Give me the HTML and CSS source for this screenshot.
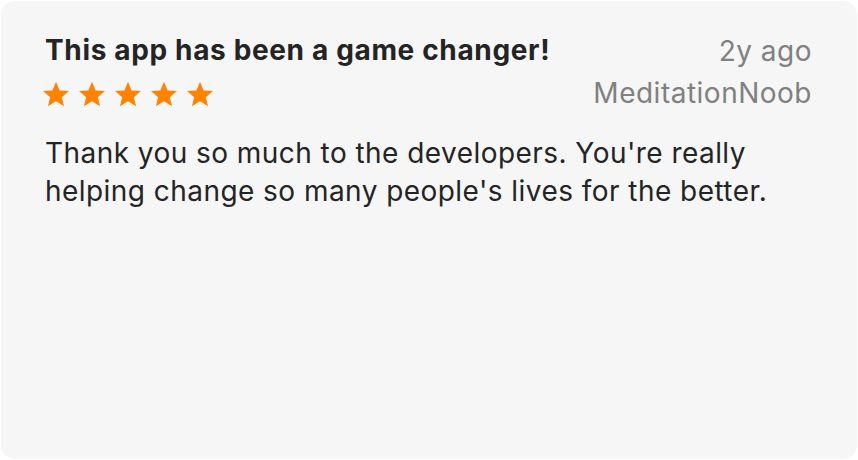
FILE: index.html
```html
<!DOCTYPE html>
<html lang="en">
<head>
    <meta charset="UTF-8">
    <meta name="viewport" content="width=device-width, initial-scale=1.0">
    <title>Review</title>
    <link rel="stylesheet" href="styles.css">
</head>
<body>
    <div class="review-card">
        <div class="review-head">
            <div class="review-left">
                <h2 class="review-title">This app has been a game changer!</h2>
                <div class="review-stars">
                    <svg viewBox="0 0 24 24"><path d="M12 1.5l3.1 7.4 8 .6-6.1 5.2 1.9 7.8L12 18.3l-6.9 4.2 1.9-7.8L.9 9.5l8-.6z"/></svg>
                    <svg viewBox="0 0 24 24"><path d="M12 1.5l3.1 7.4 8 .6-6.1 5.2 1.9 7.8L12 18.3l-6.9 4.2 1.9-7.8L.9 9.5l8-.6z"/></svg>
                    <svg viewBox="0 0 24 24"><path d="M12 1.5l3.1 7.4 8 .6-6.1 5.2 1.9 7.8L12 18.3l-6.9 4.2 1.9-7.8L.9 9.5l8-.6z"/></svg>
                    <svg viewBox="0 0 24 24"><path d="M12 1.5l3.1 7.4 8 .6-6.1 5.2 1.9 7.8L12 18.3l-6.9 4.2 1.9-7.8L.9 9.5l8-.6z"/></svg>
                    <svg viewBox="0 0 24 24"><path d="M12 1.5l3.1 7.4 8 .6-6.1 5.2 1.9 7.8L12 18.3l-6.9 4.2 1.9-7.8L.9 9.5l8-.6z"/></svg>
                </div>
            </div>
            <div class="review-meta">
                <span>2y ago</span>
                <span>MeditationNoob</span>
            </div>
        </div>
        <p class="review-text">Thank you so much to the developers. You're really helping change so many people's lives for the better.</p>
    </div>
</body>
</html>
```

FILE: styles.css
```css
body {
    margin: 0;
    padding: 1px;
    background: #ffffff;
    font-family: Inter, "Noto Sans", sans-serif;
    color: #242424;
}
.review-card {
    height: 458px;
    box-sizing: border-box;
    background: #f6f6f6;
    border-radius: 14px;
    padding: 29px 45px 29px 44px;
}
.review-head {
    display: flex;
    justify-content: space-between;
}
.review-title {
    margin: 0;
    font-size: 28px;
    font-weight: 700;
    letter-spacing: 0.65px;
    line-height: 40px;
}
.review-stars {
    display: flex;
    gap: 8px;
    margin-top: 10px;
    margin-left: -3px;
}
.review-stars svg {
    width: 28px;
    height: 28px;
    fill: #ff8200;
}
.review-meta {
    display: flex;
    flex-direction: column;
    align-items: flex-end;
    font-size: 28px;
    letter-spacing: 0.5px;
    line-height: 42px;
    color: #808080;
}
.review-text {
    margin: 20px 0 0;
    font-size: 28px;
    letter-spacing: 0.45px;
    line-height: 38px;
    color: #242424;
}
```
